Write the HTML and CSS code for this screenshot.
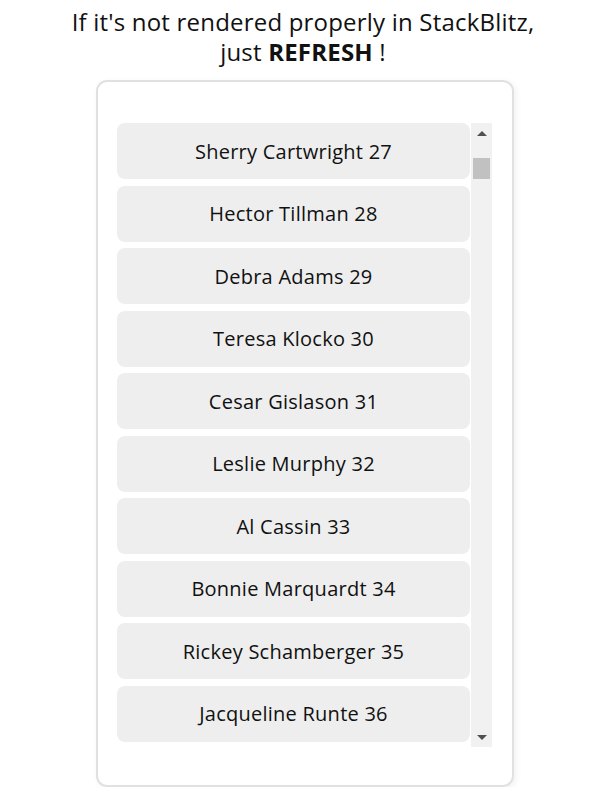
FILE: index.html
```html
<!DOCTYPE html>
<html lang="en">
<head>
<meta charset="utf-8">
<title>Virtual list</title>
<link rel="stylesheet" href="styles.css">
</head>
<body>
  <h2 class="notice">If it's not rendered properly in StackBlitz,<br>just <b>REFRESH</b> !</h2>
  <div class="card">
    <div class="viewport">
      <ul class="list">
        <li class="item">Sherry Cartwright 27</li>
        <li class="item">Hector Tillman 28</li>
        <li class="item">Debra Adams 29</li>
        <li class="item">Teresa Klocko 30</li>
        <li class="item">Cesar Gislason 31</li>
        <li class="item">Leslie Murphy 32</li>
        <li class="item">Al Cassin 33</li>
        <li class="item">Bonnie Marquardt 34</li>
        <li class="item">Rickey Schamberger 35</li>
        <li class="item">Jacqueline Runte 36</li>
      </ul>
      <div class="scrollbar">
        <div class="arrow arrow-up"></div>
        <div class="track"><div class="thumb"></div></div>
        <div class="arrow arrow-down"></div>
      </div>
    </div>
  </div>
</body>
</html>
```
FILE: styles.css
```css
html, body {
  margin: 0;
  padding: 0;
  background: #fff;
}
body {
  font-family: "Open Sans", "Noto Sans", sans-serif;
  color: #111;
  display: flex;
  flex-direction: column;
  align-items: center;
}
.notice {
  margin: 7px 0 0;
  font-size: 24px;
  font-weight: 400;
  line-height: 30px;
  text-align: center;
  letter-spacing: 0.2px;
}
.notice b {
  font-weight: 700;
}
.card {
  box-sizing: border-box;
  width: 418px;
  height: 707px;
  margin-top: 13px;
  margin-left: 4px;
  padding: 41px 20px 0 19px;
  border: 2px solid #e1e1e1;
  border-radius: 11px;
  box-shadow: 2px 2px 6px rgba(0, 0, 0, 0.06);
}
.viewport {
  display: flex;
  gap: 1px;
  height: 624px;
  overflow: hidden;
}
.list {
  list-style: none;
  margin: 0;
  padding: 0;
  width: 353px;
  flex: none;
}
.item {
  height: 56px;
  margin-bottom: 6.5px;
  background: #eeeeee;
  border-radius: 8px;
  display: flex;
  align-items: center;
  justify-content: center;
  font-size: 20px;
  letter-spacing: 0.25px;
  color: #111;
}
.scrollbar {
  width: 21px;
  flex: none;
  background: #f1f1f1;
  display: flex;
  flex-direction: column;
}
.arrow {
  height: 17px;
  flex: none;
  display: flex;
  align-items: center;
  justify-content: center;
}
.arrow::before {
  content: "";
  width: 0;
  height: 0;
  border-left: 5px solid transparent;
  border-right: 5px solid transparent;
}
.arrow-up::before {
  border-bottom: 5px solid #505050;
  margin-top: 3px;
}
.arrow-down::before {
  border-top: 5px solid #505050;
  margin-bottom: 3px;
}
.track {
  flex: 1;
  padding-top: 18px;
}
.thumb {
  margin: 0 2px;
  height: 21px;
  background: #c1c1c1;
}
```
